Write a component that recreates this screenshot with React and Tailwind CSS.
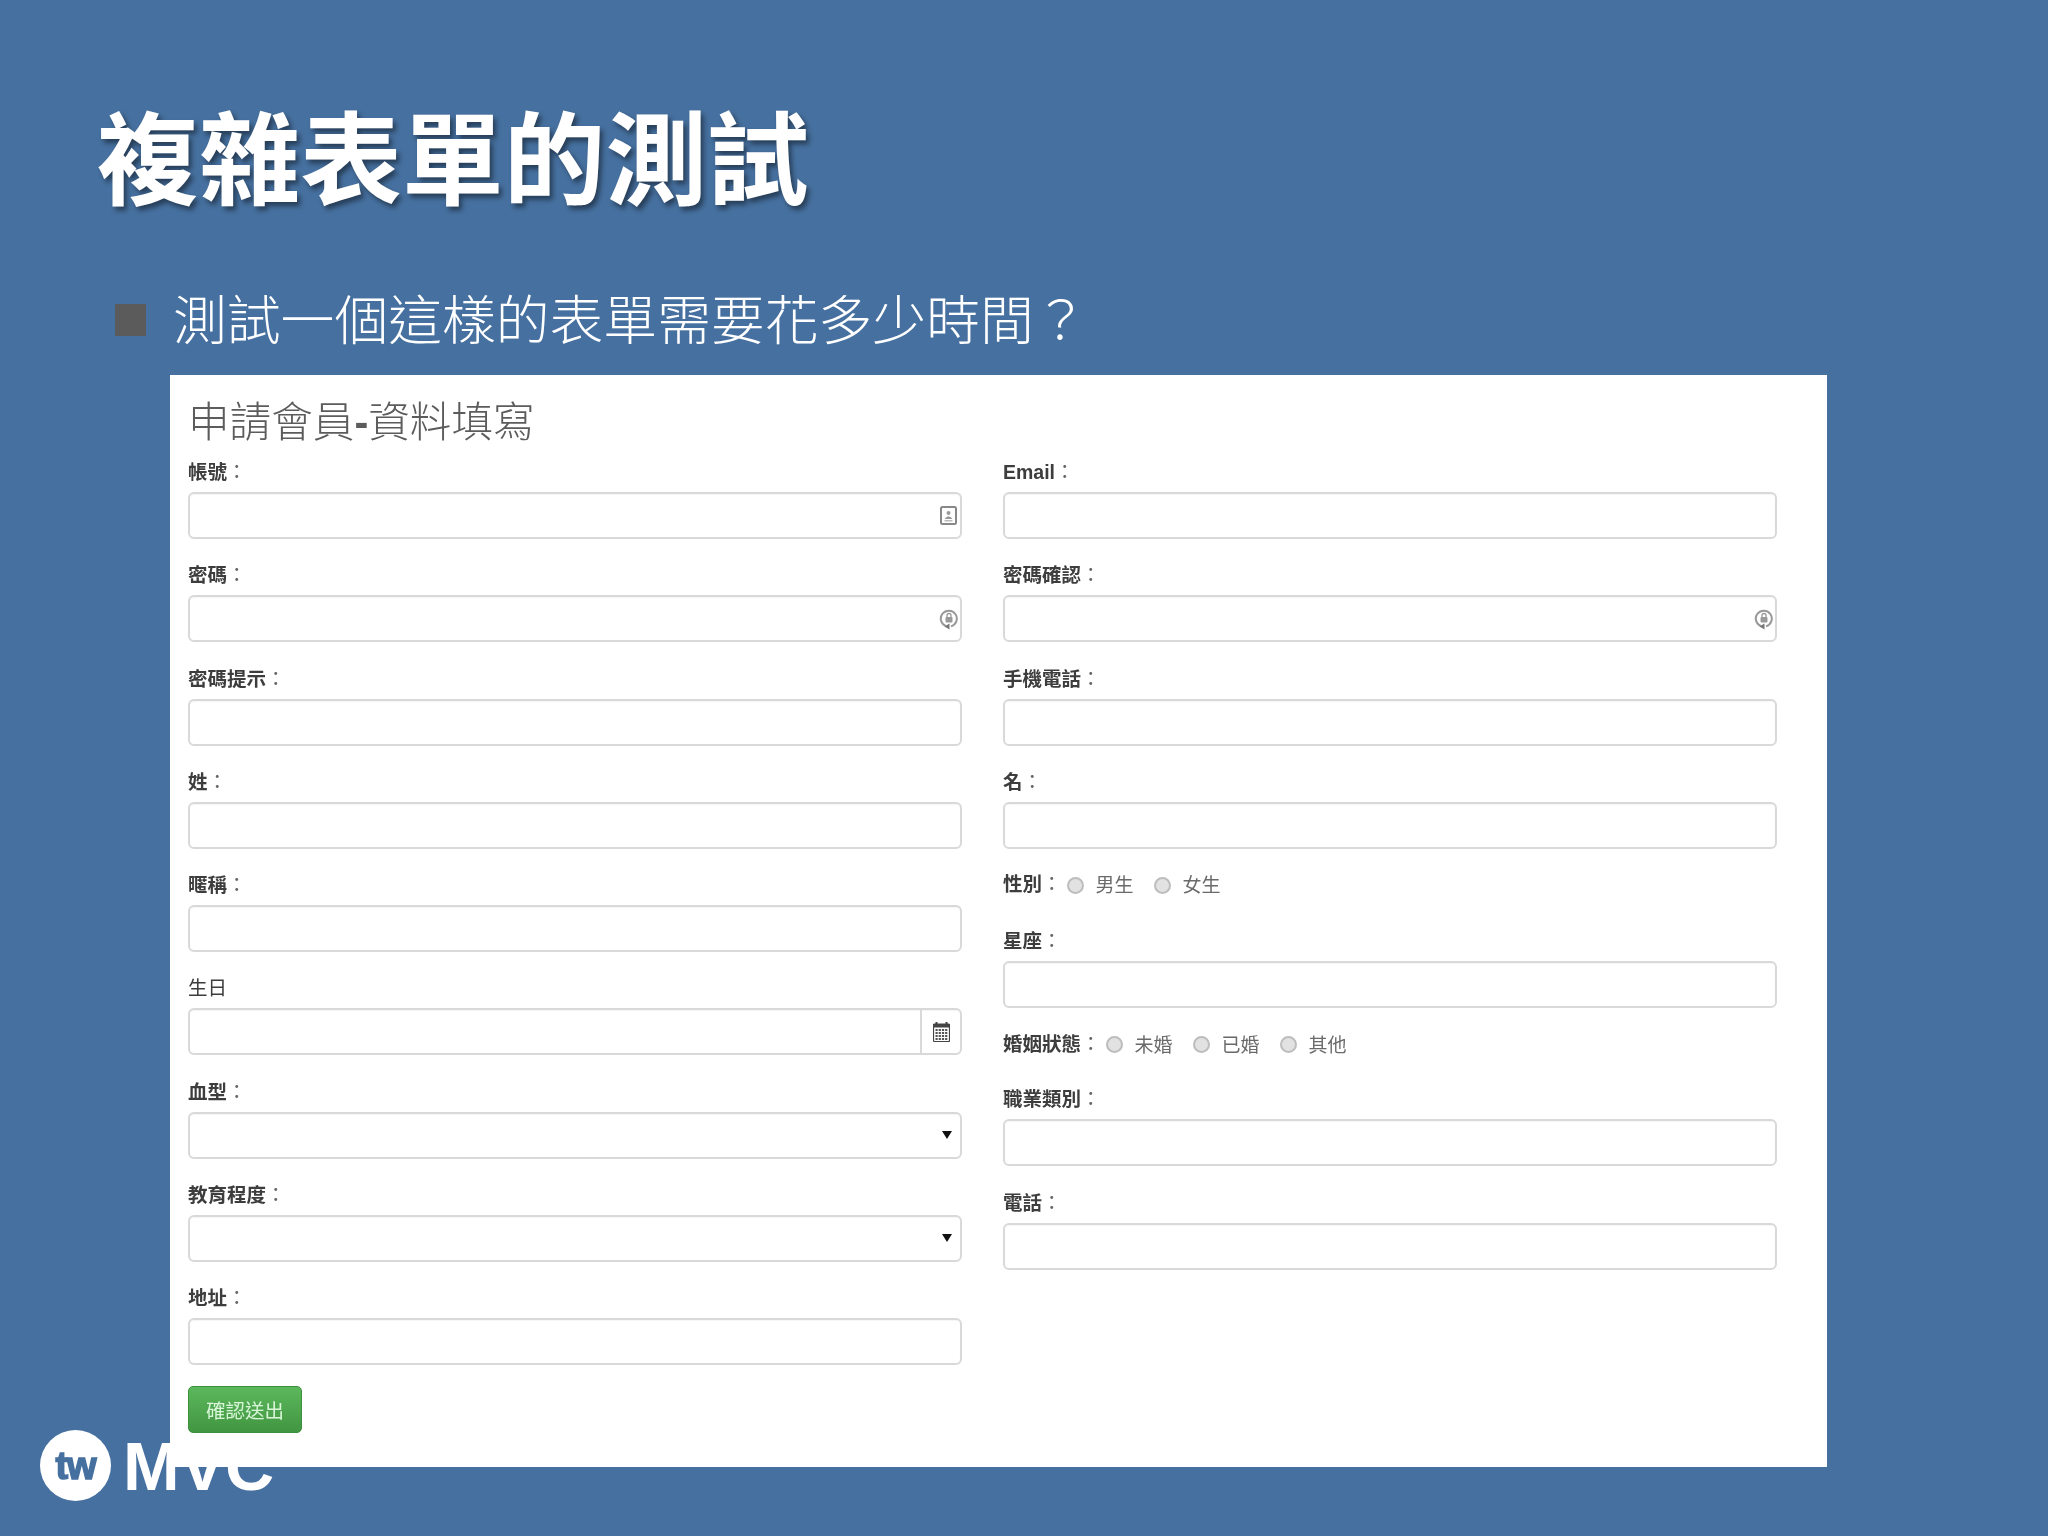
const cjk = "font-['Liberation_Sans','Noto_Sans_CJK_TC',sans-serif]";

function ContactIcon() {
  return (
    <svg width="18" height="20" viewBox="0 0 18 20" className="absolute right-[2px] top-[12px]">
      <rect x="1" y="1" width="15" height="17" rx="1.5" fill="none" stroke="#888" strokeWidth="2" />
      <circle cx="8.5" cy="7" r="2" fill="#999" />
      <path d="M4.5 13 Q8.5 7.5 12.5 13 Z" fill="#999" />
      <rect x="4.5" y="14" width="8" height="1.5" fill="#bbb" />
    </svg>
  );
}

function LockIcon() {
  return (
    <svg width="20" height="22" viewBox="0 0 20 22" className="absolute right-[1px] top-[11px]">
      <path d="M7 18.2 A8 8 0 1 1 12 18.4" fill="none" stroke="#999" strokeWidth="2" />
      <path d="M10.5 15.5 L5.5 18.5 L10.5 21.5 Z" fill="#777" />
      <rect x="6.5" y="9" width="7" height="5.5" rx="1" fill="#999" />
      <path d="M8 9 V7.5 A2 2 0 0 1 12 7.5 V9" fill="none" stroke="#999" strokeWidth="1.3" />
    </svg>
  );
}

function CalendarIcon() {
  return (
    <svg width="17" height="20" viewBox="0 0 17 20">
      <rect x="0.5" y="2" width="16" height="17.5" rx="1" fill="none" stroke="#444" strokeWidth="1.2" />
      <rect x="0.5" y="2" width="16" height="3.5" fill="#444" />
      <rect x="2.5" y="0" width="2" height="3" fill="#444" />
      <rect x="12.5" y="0" width="2" height="3" fill="#444" />
      {[7, 10, 13, 16].map((y) =>
        [2.5, 5.7, 8.9, 12.1].map((x) => (
          <rect key={`${x}-${y}`} x={x} y={y} width="2.2" height="2" fill="#555" />
        ))
      )}
    </svg>
  );
}

function Colon() {
  return <span className="font-normal text-[#666]">：</span>;
}

function Label({ children, plain }) {
  return (
    <label className={`block h-[28px] mb-[7px] text-[19.5px] leading-[30px] text-[#3d3d3d] ${plain ? "font-normal" : "font-bold"}`}>
      {children}
      {!plain && <Colon />}
    </label>
  );
}

function Input({ children, select }) {
  return (
    <div className="relative h-[47px] rounded-[6px] border-2 border-[#d9d9d9] bg-white shadow-[inset_0_1px_1px_rgba(0,0,0,0.04)]">
      {children}
      {select && (
        <svg width="10" height="8" viewBox="0 0 10 8" className="absolute right-[8px] top-[17px]">
          <path d="M0 0 H10 L5 8 Z" fill="#111" />
        </svg>
      )}
    </div>
  );
}

function Field({ label, children, select, plain }) {
  return (
    <div className="mb-[21.25px]">
      <Label plain={plain}>{label}</Label>
      <Input select={select}>{children}</Input>
    </div>
  );
}

function RadioRow({ label, options, className }) {
  return (
    <div className={`flex items-center h-[28px] pt-[2px] ${className}`}>
      <span className="text-[19.5px] font-bold text-[#3d3d3d] w-fit">
        {label}
        <Colon />
      </span>
      <div className="flex items-center ml-[5px]">
        {options.map((o) => (
          <div key={o} className="flex items-center mr-[20px]">
            <span className="w-[17px] h-[17px] rounded-full border-2 border-[#bdbdbd] bg-[#e2e2e2]" />
            <span className="ml-[12px] pt-[3px] text-[19px] text-[#6a6a6a]">{o}</span>
          </div>
        ))}
      </div>
    </div>
  );
}

export default function App() {
  return (
    <div className={`relative w-[2048px] h-[1536px] overflow-hidden bg-[#46709f] ${cjk}`}>
      {/* logo sits behind the white panel */}
      <div className="absolute left-[40px] top-[1430px] flex items-center blur-[0.7px]">
        <div className="w-[71px] h-[71px] rounded-full bg-white flex items-center justify-center">
          <span className="text-[38px] font-bold tracking-[-1px] text-[#46709f] [-webkit-text-stroke:1.5px_#46709f] leading-none">tw</span>
        </div>
        <span className="ml-[12px] text-[68px] leading-none font-bold text-white">MVC</span>
      </div>

      <div className="relative flex flex-col pt-[92px]">
        <h1 className="pl-[97px] h-[140px] text-[101.7px] leading-[140px] font-bold text-white [text-shadow:3px_4px_5px_rgba(0,0,0,0.45)]">
          複雜表單的測試
        </h1>

        <div className="flex items-center h-[60px] mt-[58px] pl-[115px]">
          <span className="w-[31px] h-[32px] bg-[#5b5b5b]" />
          <span className="ml-[27px] pt-[3px] text-[53.8px] leading-none font-light text-white">
            測試一個這樣的表單需要花多少時間？
          </span>
        </div>

        <div className="ml-[170px] mt-[25px] w-[1657px] h-[1092px] bg-white pt-[25px] pl-[18px]">
          <h2 className="h-[44px] pt-[1px] text-[41.6px] leading-[44px] font-light text-[#5c5c5c] blur-[0.3px]">
            申請會員<span className="font-bold">-</span>資料填寫
          </h2>

          <div className="flex mt-[13px] blur-[0.3px]">
            <div className="w-[774px]">
              <Field label="帳號"><ContactIcon /></Field>
              <Field label="密碼"><LockIcon /></Field>
              <Field label="密碼提示" />
              <Field label="姓" />
              <Field label="暱稱" />
              <Field label="生日" plain>
                <div className="absolute right-0 top-0 bottom-0 w-[40px] border-l-2 border-[#d9d9d9] flex items-center justify-center">
                  <CalendarIcon />
                </div>
              </Field>
              <Field label="血型" select />
              <Field label="教育程度" select />
              <Field label="地址" />
              <button className="w-[114px] h-[47px] pt-[3px] rounded-[5px] border border-[#3e8f3e] bg-gradient-to-b from-[#5cb85c] to-[#419641] text-[19.5px] text-[#d8f5d8]">
                確認送出
              </button>
            </div>

            <div className="w-[774px] ml-[41px]">
              <Field label="Email" />
              <Field label="密碼確認"><LockIcon /></Field>
              <Field label="手機電話" />
              <Field label="名" />
              <RadioRow label="性別" options={["男生", "女生"]} className="mb-[28px]" />
              <Field label="星座" />
              <RadioRow label="婚姻狀態" options={["未婚", "已婚", "其他"]} className="mb-[27px]" />
              <Field label="職業類別" />
              <Field label="電話" />
            </div>
          </div>
        </div>
      </div>
    </div>
  );
}
